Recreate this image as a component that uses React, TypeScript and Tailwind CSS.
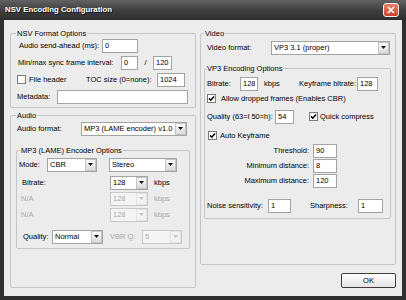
import React from 'react';

type Kids = { children?: React.ReactNode };

function Group({ title, className = '', legendClass = '', children }: Kids & { title: string; className?: string; legendClass?: string }) {
  return (
    <fieldset className={`border border-[#c6c6c6] rounded-[2px] ${className}`}>
      <legend className={`px-[1px] leading-[9px] ${legendClass}`}>{title}</legend>
      {children}
    </fieldset>
  );
}

function Edit({ value, w }: { value: string; w: string }) {
  return (
    <input
      readOnly
      value={value}
      className={`${w} h-[14px] shrink-0 bg-white border border-[#a3a3a3] px-[2px] outline-none`}
    />
  );
}

function Arrow({ disabled }: { disabled?: boolean }) {
  return (
    <span
      className={
        disabled
          ? 'w-[11px] h-[12px] shrink-0 flex items-center justify-center border border-[#e2e2e2] bg-[#f3f3f3]'
          : 'w-[11px] h-[12px] shrink-0 flex items-center justify-center border border-[#c4c4c4] bg-linear-to-b from-[#fafafa] to-[#dcdcdc]'
      }
    >
      <svg width="5" height="3" viewBox="0 0 5 3">
        <path d="M0 0H5L2.5 3Z" fill={disabled ? '#c4c4c4' : '#111'} />
      </svg>
    </span>
  );
}

function Combo({ value, w, disabled }: { value: string; w: string; disabled?: boolean }) {
  return (
    <div
      className={
        disabled
          ? `${w} h-[14px] shrink-0 flex items-center border border-[#c9c9c9] bg-[#f4f4f4] text-[#a9a9a9]`
          : `${w} h-[14px] shrink-0 flex items-center border border-[#a3a3a3] bg-white`
      }
    >
      <span className="flex-1 min-w-0 pl-[2px] overflow-hidden whitespace-nowrap">{value}</span>
      <Arrow disabled={disabled} />
    </div>
  );
}

function Check({ checked, className = '' }: { checked?: boolean; className?: string }) {
  return (
    <span className={`w-[9px] h-[9px] shrink-0 flex items-center justify-center border border-[#7c7c7c] bg-white ${className}`}>
      {checked && (
        <svg width="7" height="7" viewBox="0 0 7 7">
          <path d="M1 3.4L2.8 5.2L6 1.4" stroke="#000" strokeWidth="1.5" fill="none" />
        </svg>
      )}
    </span>
  );
}

function Row({ className = '', children }: Kids & { className?: string }) {
  return <div className={`h-[15px] flex items-center whitespace-nowrap ${className}`}>{children}</div>;
}

const App: React.FC = () => {
  return (
    <div className="w-[406px] h-[300px] flex flex-col bg-[#303030] font-['Liberation_Sans',Arial,sans-serif] text-[7.5px] text-black">
      <div className="h-[20px] shrink-0 flex items-center justify-between pl-[5px] pr-[7px] bg-linear-to-b from-[#626262] via-[#404040] to-[#2e2e2e]">
        <span className="text-white font-bold text-[7.8px] [text-shadow:1px_1px_0_#111]">NSV Encoding Configuration</span>
        <span className="w-[16px] h-[14px] rounded-[3px] border border-[#f0f0f0] bg-linear-to-b from-[#e8806a] to-[#c9442a] flex items-center justify-center">
          <svg width="8" height="8" viewBox="0 0 8 8">
            <path d="M1 1L7 7M7 1L1 7" stroke="#fff" strokeWidth="1.6" />
          </svg>
        </span>
      </div>

      <div className="flex-1 mx-[4px] mb-[4px] bg-[#ececec] flex gap-[4px] px-[6px] pt-[9px] pb-[8px]">
        {/* left column */}
        <div className="w-[186px] flex flex-col">
          <Group title="NSV Format Options" className="px-[7px] pb-[3px]" legendClass="ml-[-2px]">
            <div className="flex flex-col gap-[2px]">
              <Row>
                <span className="w-[84px] pl-[1px]">Audio send-ahead (ms):</span>
                <Edit value="0" w="w-[36px]" />
              </Row>
              <Row>
                <span className="w-[103px]">Min/max sync frame interval:</span>
                <Edit value="0" w="w-[17px]" />
                <span className="w-[15px] text-center">/</span>
                <Edit value="120" w="w-[19px]" />
              </Row>
              <Row>
                <Check className="ml-[-1px]" />
                <span className="ml-[3px] w-[57px]">File header</span>
                <span className="w-[71px]">TOC size (0=none):</span>
                <Edit value="1024" w="w-[28px]" />
              </Row>
              <Row>
                <span className="ml-[-1px] w-[40px]">Metadata:</span>
                <Edit value="" w="flex-1 min-w-0" />
              </Row>
            </div>
          </Group>

          <Group title="Audio" className="mt-[3px] flex-1 px-[6px]" legendClass="ml-[-1px]">
            <Row className="mt-[1px]">
              <span className="w-[64px]">Audio format:</span>
              <Combo value="MP3 (LAME encoder) v1.0" w="w-[106px]" />
            </Row>
            <Group title="MP3 (LAME) Encoder Options" className="mt-[10px] mx-[-1px] pl-[2px] pb-[4px]" legendClass="ml-[1px]">
              <Row className="mt-[2px]">
                <span className="w-[28px]">Mode:</span>
                <Combo value="CBR" w="w-[50px]" />
                <Combo value="Stereo" w="w-[68px] ml-[12px]" />
              </Row>
              <Row className="mt-[3px]">
                <span className="w-[91px] pl-[3px]">Bitrate:</span>
                <Combo value="128" w="w-[38px]" />
                <span className="ml-[6px]">kbps</span>
              </Row>
              <Row className="mt-[1px] text-[#a9a9a9]">
                <span className="w-[91px] pl-[2px]">N/A</span>
                <Combo value="128" w="w-[38px]" disabled />
                <span className="ml-[6px]">kbps</span>
              </Row>
              <Row className="mt-[1px] text-[#a9a9a9]">
                <span className="w-[91px] pl-[2px]">N/A</span>
                <Combo value="128" w="w-[38px]" disabled />
                <span className="ml-[6px]">kbps</span>
              </Row>
              <Row className="mt-[7px]">
                <span className="w-[33px] pl-[4px]">Quality:</span>
                <Combo value="Normal" w="w-[51px]" />
                <span className="ml-[7px] w-[32px] text-[#a9a9a9]">VBR Q:</span>
                <Combo value="5" w="w-[40px]" disabled />
              </Row>
            </Group>
          </Group>
        </div>

        {/* right column */}
        <div className="w-[196px] flex flex-col">
          <Group title="Video" className="flex-1 pl-[6px] pr-[5px]" legendClass="ml-[-3px]">
            <Row className="mt-[2px]">
              <span className="w-[64px]">Video format:</span>
              <Combo value="VP3 3.1 (proper)" w="w-[119px]" />
            </Row>
            <Group title="VP3 Encoding Options" className="mt-[9px] ml-[-3px] mr-[-1px] pl-[2px] pb-[5px]" legendClass="ml-[-1px]">
              <Row className="mt-[3px]">
                <span className="w-[33px]">Bitrate:</span>
                <Edit value="128" w="w-[18px]" />
                <span className="ml-[6px] w-[35px]">kbps</span>
                <span className="w-[58px]">Keyframe bitrate:</span>
                <Edit value="128" w="w-[21px]" />
              </Row>
              <Row>
                <Check checked />
                <span className="ml-[5px]">Allow dropped frames (Enables CBR)</span>
              </Row>
              <Row className="mt-[3px]">
                <span className="w-[68px]">Quality (63=l 50=h):</span>
                <Edit value="54" w="w-[19px]" />
                <Check checked className="ml-[15px]" />
                <span className="ml-[2px]">Quick compress</span>
              </Row>
              <Row className="mt-[4px]">
                <Check checked className="ml-[1px]" />
                <span className="ml-[3px]">Auto Keyframe</span>
              </Row>
              <Row>
                <span className="w-[102px] text-right">Threshold:</span>
                <Edit value="90" w="w-[24px] ml-[4px]" />
              </Row>
              <Row>
                <span className="w-[102px] text-right">Minimum distance:</span>
                <Edit value="8" w="w-[24px] ml-[4px]" />
              </Row>
              <Row>
                <span className="w-[102px] text-right">Maximum distance:</span>
                <Edit value="120" w="w-[24px] ml-[4px]" />
              </Row>
              <Row className="mt-[10px]">
                <span className="w-[61px]">Noise sensitivity:</span>
                <Edit value="1" w="w-[23px]" />
                <span className="ml-[19px] w-[48px]">Sharpness:</span>
                <Edit value="1" w="w-[25px]" />
              </Row>
            </Group>
          </Group>
          <button className="mt-[8px] self-end w-[55px] h-[15px] rounded-[2px] border border-[#3c3c3c] bg-linear-to-b from-[#ffffff] to-[#e4e4e4] flex items-center justify-center">
            OK
          </button>
        </div>
      </div>
    </div>
  );
};

export default App;
